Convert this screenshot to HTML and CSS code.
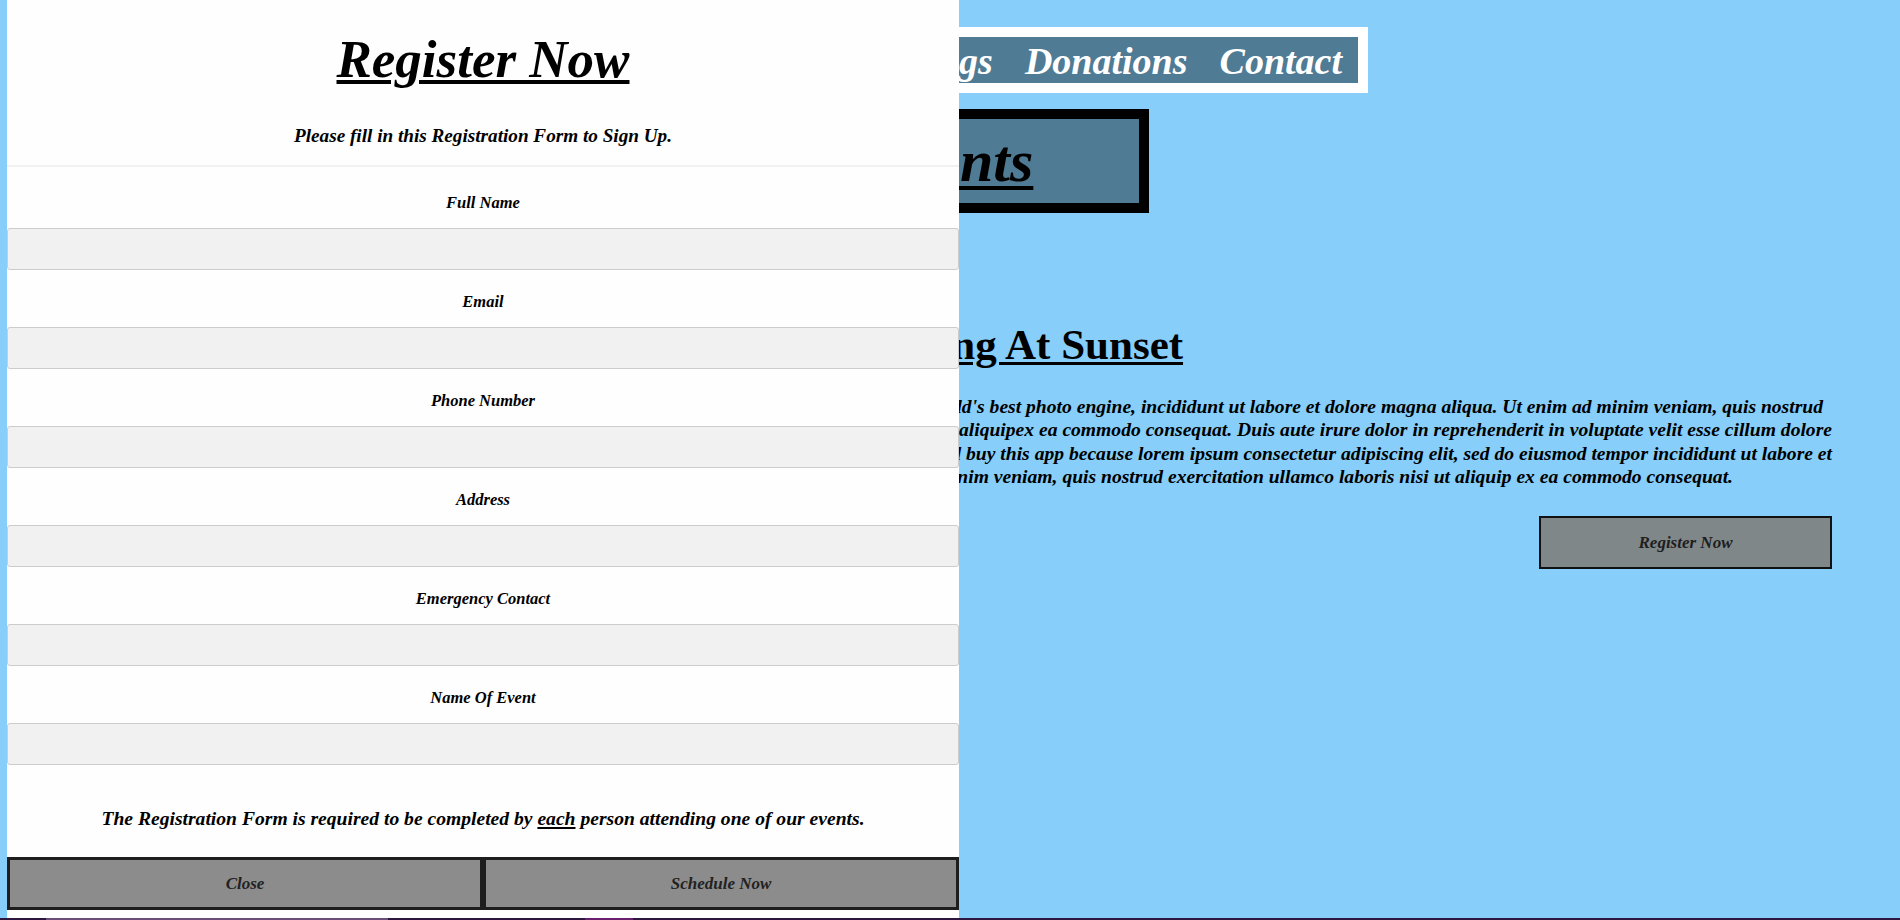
FILE: index.html
```html
<!DOCTYPE html>
<html lang="en">
<head>
<meta charset="utf-8">
<title>Events</title>
<link rel="stylesheet" href="styles.css">
</head>
<body>
<div class="page">
  <header class="top">
    <nav class="nav">
      <a href="#">Home</a>
      <a href="#">About</a>
      <a href="#">Events</a>
      <a href="#">Meetings</a>
      <a href="#">Donations</a>
      <a href="#">Contact</a>
    </nav>
  </header>
  <div class="title-box"><h1>Events</h1></div>
  <section class="event">
    <h2 class="event-title">Camping At Sunset</h2>
    <p class="event-text">
      <span class="line line-first">Lorem ipsum dolor sit amet, consectetur adipiscing elit, sed do eiusmod tempor. The world's best photo engine, incididunt ut labore et dolore magna aliqua. Ut enim ad minim veniam, quis nostrud</span>
      <span class="line">exercitation ullamco laboris nisi ut aliquipex ea commodo consequat. Duis aute irure dolor in reprehenderit in voluptate velit esse cillum dolore</span>
      <span class="line">eu fugiat nulla pariatur. You should buy this app because lorem ipsum consectetur adipiscing elit, sed do eiusmod tempor incididunt ut labore et</span>
      <span class="line line-last">dolore magna aliqua. Ut enim ad minim veniam, quis nostrud exercitation ullamco laboris nisi ut aliquip ex ea commodo consequat.</span>
    </p>
    <div class="event-actions"><button class="btn-register" type="button">Register Now</button></div>
  </section>
</div>
<footer class="footer">
  <span class="seg seg-dark" style="width:46px"></span>
  <span class="seg seg-light" style="width:342px"></span>
  <span class="seg seg-dark" style="width:197px"></span>
  <span class="seg seg-pink" style="width:48px"></span>
  <span class="seg seg-dark seg-fill"></span>
</footer>

<div class="modal">
  <h1 class="modal-title">Register Now</h1>
  <p class="modal-sub">Please fill in this Registration Form to Sign Up.</p>
  <form class="modal-form">
    <label class="field-label">Full Name</label>
    <input class="field-input" type="text">
    <label class="field-label">Email</label>
    <input class="field-input" type="text">
    <label class="field-label">Phone Number</label>
    <input class="field-input" type="text">
    <label class="field-label">Address</label>
    <input class="field-input" type="text">
    <label class="field-label">Emergency Contact</label>
    <input class="field-input" type="text">
    <label class="field-label">Name Of Event</label>
    <input class="field-input" type="text">
    <p class="modal-note">The Registration Form is required to be completed by <u class="each">each</u> person attending one of our events.</p>
    <div class="modal-buttons">
      <button class="modal-btn" type="button">Close</button>
      <button class="modal-btn" type="button">Schedule Now</button>
    </div>
  </form>
</div>
</body>
</html>
```

FILE: styles.css
```css
* { box-sizing: border-box; }

html, body {
  margin: 0;
  padding: 0;
}

body {
  font-family: "Liberation Serif", "Times New Roman", serif;
  font-style: italic;
  font-weight: bold;
  color: #000;
  background: #87cefa;
  overflow: hidden;
}

.page {
  height: 918px;
  padding-top: 27px;
  background: #87cefa;
}

/* navigation */
.top {
  display: flex;
  justify-content: flex-end;
  padding-right: 532px;
}

.nav {
  display: flex;
  height: 66px;
  border: 10px solid #fff;
  background: #4f7b95;
}

.nav a {
  color: #fff;
  text-decoration: none;
  font-size: 38px;
  line-height: 43px;
  padding: 3px 16px 0;
}

/* page title */
.title-box {
  width: 398px;
  height: 104px;
  margin: 16px auto 0;
  border: 10px solid #000;
  background: #4f7b95;
  text-align: center;
}

.title-box h1 {
  margin: 0;
  font-size: 60px;
  line-height: 84px;
  font-weight: bold;
  text-decoration: underline;
  text-decoration-thickness: 4px;
  text-underline-offset: 5px;
}

/* event */
.event {
  margin: 0 68px;
  padding-top: 107px;
}

.event-title {
  margin: 0;
  padding-left: 759px;
  font-size: 43px;
  line-height: 50px;
  font-style: normal;
  font-weight: bold;
  text-decoration: underline;
  text-decoration-thickness: 3px;
  text-underline-offset: 3px;
}

.event-text {
  margin: 25px 0 0;
  font-size: 19.6px;
  line-height: 23.3px;
  text-align: right;
}

.line {
  display: block;
  white-space: nowrap;
}

.line-first { padding-right: 9px; }
.line-last { padding-right: 99px; }

.event-actions {
  display: flex;
  justify-content: flex-end;
  margin-top: 28px;
}

.btn-register {
  width: 293px;
  height: 53px;
  border: 2px solid #111;
  background: #7f8789;
  color: #1e1e1e;
  font-family: inherit;
  font-style: italic;
  font-weight: bold;
  font-size: 17px;
}

/* footer strip */
.footer {
  display: flex;
  height: 2px;
  background: #2d1640;
}

.seg { display: block; height: 2px; }
.seg-dark { background: #2d1640; }
.seg-light { background: #6a4d78; }
.seg-pink { background: #6a1f6e; }
.seg-fill { flex: 1; }

/* modal */
.modal {
  position: fixed;
  left: 7px;
  top: 0;
  width: 952px;
  height: 918px;
  padding-top: 27px;
  background: #fefefe;
  text-align: center;
}

.modal-title {
  margin: 0;
  font-size: 53px;
  line-height: 64px;
  font-weight: bold;
  text-decoration: underline;
  text-decoration-thickness: 4px;
  text-underline-offset: 3px;
}

.modal-sub {
  margin: 33px 0 0;
  font-size: 19.2px;
  line-height: 24px;
}

.modal-form {
  margin-top: 17px;
  padding-top: 4px;
  border-top: 2px solid #f1f1f1;
}

.field-label {
  display: block;
  margin-top: 22px;
  font-size: 16.5px;
  line-height: 20px;
}

.field-input {
  display: block;
  width: 100%;
  height: 42px;
  margin: 15px 0 0;
  border: 1px solid #ccc;
  border-radius: 3px;
  background: #f1f1f1;
}

.modal-note {
  margin: 42px 0 0;
  font-size: 19.6px;
  line-height: 24px;
}

.each {
  text-decoration-thickness: 2px;
  text-underline-offset: 2px;
}

.modal-buttons {
  display: flex;
  margin-top: 26px;
}

.modal-btn {
  flex: 1;
  height: 53px;
  border: 3px solid #1e1e1e;
  background: #8c8c8c;
  color: #222;
  font-family: inherit;
  font-style: italic;
  font-weight: bold;
  font-size: 17px;
}
```
